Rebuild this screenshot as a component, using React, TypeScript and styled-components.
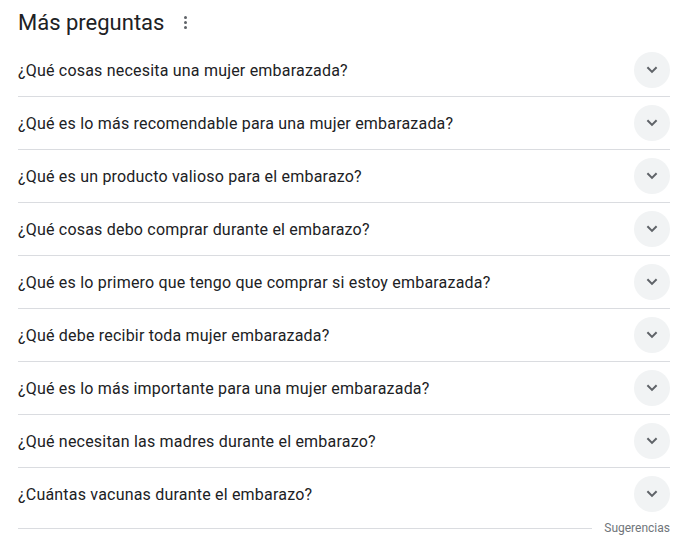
import React from 'react';
import styled, { createGlobalStyle } from 'styled-components';

const GlobalStyle = createGlobalStyle`
  body {
    margin: 0;
    background: #fff;
    font-family: Roboto, "Liberation Sans", Arial, sans-serif;
    color: #202124;
  }
`;

const Wrapper = styled.div`
  padding: 0 14px 0 18px;
`;

const Header = styled.div`
  height: 44px;
  display: flex;
  align-items: center;
  gap: 14px;
  & h2 {
    margin: 0;
    font-size: 22px;
    font-weight: 400;
    color: #202124;
  }
`;

const MenuDots = styled.div`
  display: flex;
  flex-direction: column;
  gap: 2px;
  padding: 2px 6px;
  & span {
    width: 3px;
    height: 3px;
    border-radius: 50%;
    background: #5f6368;
  }
`;

const Row = styled.div`
  height: 52px;
  display: flex;
  align-items: center;
  justify-content: space-between;
  border-bottom: 1px solid #dadce0;
  font-size: 16px;
  letter-spacing: 0.2px;
  &:last-of-type {
    border-bottom: none;
  }
`;

const ChevronButton = styled.div`
  width: 36px;
  height: 36px;
  border-radius: 50%;
  background: #f1f3f4;
  display: flex;
  align-items: center;
  justify-content: center;
`;

const Footer = styled.div`
  height: 16px;
  display: flex;
  align-items: center;
  gap: 12px;
  font-size: 12px;
  color: #70757a;
  &::before {
    content: '';
    flex: 1;
    height: 1px;
    background: #dadce0;
  }
`;

const questions = [
  '¿Qué cosas necesita una mujer embarazada?',
  '¿Qué es lo más recomendable para una mujer embarazada?',
  '¿Qué es un producto valioso para el embarazo?',
  '¿Qué cosas debo comprar durante el embarazo?',
  '¿Qué es lo primero que tengo que comprar si estoy embarazada?',
  '¿Qué debe recibir toda mujer embarazada?',
  '¿Qué es lo más importante para una mujer embarazada?',
  '¿Qué necesitan las madres durante el embarazo?',
  '¿Cuántas vacunas durante el embarazo?',
];

const Chevron = () => (
  <svg width="12" height="8" viewBox="0 0 12 8">
    <path d="M1.4 1.3 6 5.9l4.6-4.6" fill="none" stroke="#5f6368" strokeWidth="2" />
  </svg>
);

const App = () => {
  return (
    <Wrapper>
      <GlobalStyle />
      <Header>
        <h2>Más preguntas</h2>
        <MenuDots>
          <span />
          <span />
          <span />
        </MenuDots>
      </Header>
      <div>
        {questions.map((q) => (
          <Row key={q}>
            <span>{q}</span>
            <ChevronButton>
              <Chevron />
            </ChevronButton>
          </Row>
        ))}
      </div>
      <Footer>Sugerencias</Footer>
    </Wrapper>
  );
};

export default App;
